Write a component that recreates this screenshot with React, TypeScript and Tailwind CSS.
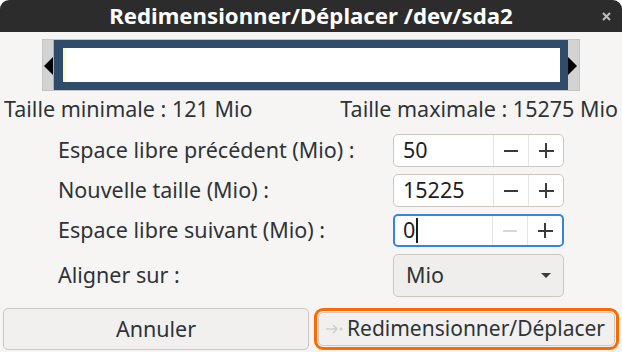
import React from "react";

const font = { fontFamily: '"Noto Sans", "Open Sans", sans-serif' };

function Spin({ value, focused, minusDisabled }: { value: string; focused?: boolean; minusDisabled?: boolean }) {
  return (
    <div
      className={
        "flex h-[33px] w-[171px] rounded-[5px] bg-white " +
        (focused ? "border-2 border-[#3584e4]" : "border border-[#cdc7c2]")
      }
    >
      <div className={"flex flex-1 items-center text-[21.5px] text-[#1e1e1e] " + (focused ? "pl-[8px]" : "pl-[9px]")}>
        {value}
        {focused && <span className="ml-[1px] inline-block h-[25px] w-[2px] bg-[#1e1e1e]" />}
      </div>
      <div className="flex w-[35px] items-center justify-center border-l border-[#e6e4e2]">
        <span className={"block h-[2px] w-[14px] " + (minusDisabled ? "bg-[#d8d6d4]" : "bg-[#3b3b3b]")} />
      </div>
      <div className="relative flex w-[35px] items-center justify-center border-l border-[#e6e4e2]">
        <span className="block h-[2px] w-[15px] bg-[#3b3b3b]" />
        <span className="absolute block h-[15px] w-[2px] bg-[#3b3b3b]" />
      </div>
    </div>
  );
}

export default function App() {
  return (
    <div className="h-[352px] w-[622px] bg-white" style={font}>
      <div className="flex h-[352px] w-[622px] flex-col overflow-hidden rounded-t-[9px] bg-[#f6f5f4]">
        {/* Title bar */}
        <div className="relative flex h-[32px] shrink-0 items-center justify-center bg-[#2c2c2c]">
          <span className="text-[22.2px] font-bold leading-none text-white">Redimensionner/Déplacer /dev/sda2</span>
          <svg className="absolute right-[11px] top-[12px]" width="9" height="9" viewBox="0 0 9 9">
            <path d="M1 1L8 8M8 1L1 8" stroke="#bdbdbd" strokeWidth="2" />
          </svg>
        </div>

        {/* Partition bar */}
        <div className="ml-[42px] mt-[7px] flex h-[52px] w-[538px] shrink-0 border border-[#c4c4c4] bg-[#d3d3d3]">
          <div className="relative w-[11px] border-r border-[#b0b0b0]">
            <span className="absolute left-[1px] top-[17px] h-0 w-0 border-y-[9px] border-r-[9px] border-y-transparent border-r-black" />
          </div>
          <div className="flex flex-1 border-[8px] border-l-[9px] border-[#2f4d6b] bg-white">
            <div className="w-[3px] bg-[#fafac3]" />
            <div className="flex-1" />
          </div>
          <div className="relative w-[11px]">
            <span className="absolute left-0 top-[17px] h-0 w-0 border-y-[9px] border-l-[9px] border-y-transparent border-l-black" />
          </div>
        </div>

        {/* min / max */}
        <div className="mt-[4px] flex h-[28px] shrink-0 items-center justify-between px-[4px] text-[21.5px] text-[#2e3436]">
          <span>Taille minimale : 121 Mio</span>
          <span>Taille maximale : 15275 Mio</span>
        </div>

        {/* Form rows */}
        <div className="mt-[11px] flex flex-col gap-[7px] pl-[58px] text-[21.5px] text-[#2e3436]">
          <div className="flex h-[33px] items-center">
            <span className="w-[335px]">Espace libre précédent (Mio) :</span>
            <Spin value="50" />
          </div>
          <div className="flex h-[33px] items-center">
            <span className="w-[335px]">Nouvelle taille (Mio) :</span>
            <Spin value="15225" />
          </div>
          <div className="flex h-[33px] items-center">
            <span className="w-[335px]">Espace libre suivant (Mio) :</span>
            <Spin value="0" focused minusDisabled />
          </div>
          <div className="flex h-[43px] items-center">
            <span className="w-[335px]">Aligner sur :</span>
            <div className="flex h-[43px] w-[171px] items-center justify-between rounded-[5px] border border-[#cdc7c2] bg-[#efeeed] pl-[12px] pr-[12px] text-[#2e3436]">
              <span>Mio</span>
              <span className="h-0 w-0 border-x-[5px] border-t-[5px] border-x-transparent border-t-[#3b3b3b]" />
            </div>
          </div>
        </div>

        {/* Buttons */}
        <div className="mt-[11px] flex gap-[5px] px-[3px] text-[21.5px] text-[#2e3436]">
          <div className="flex h-[42px] w-[306px] items-center justify-center rounded-[5px] border border-[#cdc7c2] bg-[#f1f0ef]">
            Annuler
          </div>
          <div className="flex h-[42px] w-[305px] rounded-[9px] border-[3px] border-[#ff6a00] p-[1px]">
            <div className="flex flex-1 items-center rounded-[5px] border border-[#cdc7c2] bg-[#f1f0ef] pl-[6px]">
              <svg className="mr-[4px]" width="18" height="12" viewBox="0 0 18 12">
                <path d="M1 6H12M8 2L12 6L8 10" stroke="#cfcfcf" strokeWidth="1.5" fill="none" />
                <circle cx="16" cy="6" r="1.5" fill="#cfcfcf" />
              </svg>
              <span className="text-[21px]">Redimensionner/Déplacer</span>
            </div>
          </div>
        </div>
      </div>
    </div>
  );
}
